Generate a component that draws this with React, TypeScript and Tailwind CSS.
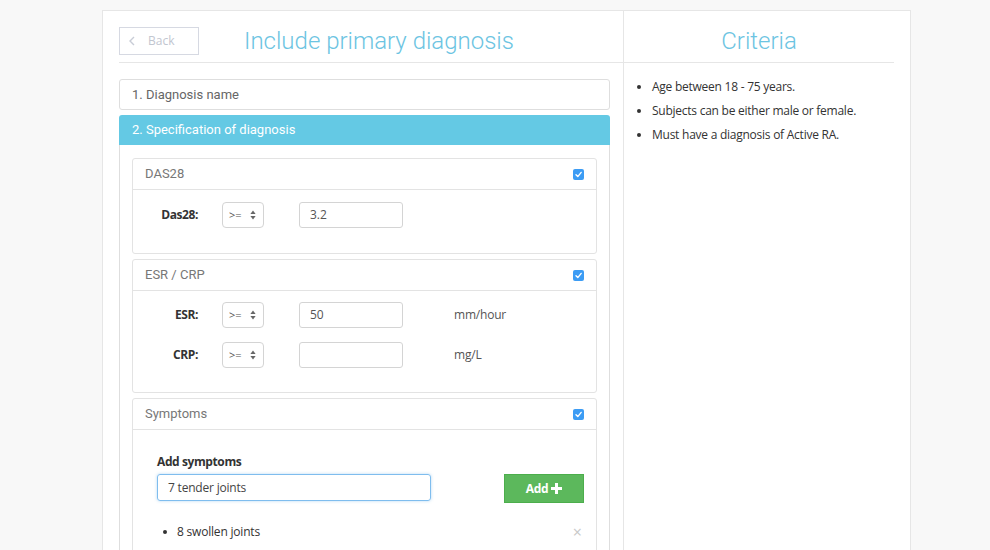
import React from 'react';

const sans = { fontFamily: '"Open Sans", "Liberation Sans", sans-serif' };
const roboto = { fontFamily: 'Roboto, "Open Sans", sans-serif' };

function CheckBox() {
  return (
    <svg width="11" height="11" viewBox="0 0 11 11" className="shrink-0">
      <rect x="0" y="0" width="11" height="11" rx="2" fill="#3c9cf4" />
      <path d="M3 5.8 L4.8 7.6 L8.2 3.4" fill="none" stroke="#fff" strokeWidth="1.4" strokeLinecap="round" strokeLinejoin="round" />
    </svg>
  );
}

function SelectBox() {
  return (
    <div className="w-[42px] h-[26px] border border-[#d4d4d4] rounded-[4px] bg-white flex items-center justify-between pl-[6px] pr-[7px] text-[11px] text-[#555]">
      <span>&gt;=</span>
      <svg width="6" height="10" viewBox="0 0 6 10">
        <path d="M3 0.5 L5.6 4 L0.4 4 Z" fill="#666" />
        <path d="M3 9.5 L5.6 6 L0.4 6 Z" fill="#666" />
      </svg>
    </div>
  );
}

function Row({ label, value, unit }: { label: string; value: string; unit?: string }) {
  return (
    <div className="flex items-center h-[26px]">
      <div className="w-[65px] text-right font-bold text-[12px] tracking-[-0.4px] text-[#333]">{label}</div>
      <div className="ml-[24px]">
        <SelectBox />
      </div>
      <div className="ml-[35px] w-[104px] h-[26px] border border-[#d4d4d4] rounded-[3px] flex items-center pl-[10px] text-[12px] text-[#555]">
        {value}
      </div>
      {unit && <div className="ml-[51px] text-[12px] tracking-[-0.2px] text-[#555]">{unit}</div>}
    </div>
  );
}

function Panel({ title, children }: { title: string; children: React.ReactNode }) {
  return (
    <div className="border border-[#e3e3e3] rounded-[3px] bg-white">
      <div className="h-[31px] border-b border-[#e3e3e3] flex items-center justify-between pl-[12px] pr-[12px]">
        <span className="text-[13px] text-[#777]" style={roboto}>{title}</span>
        <CheckBox />
      </div>
      {children}
    </div>
  );
}

export default function App() {
  const criteria = [
    'Age between 18 - 75 years.',
    'Subjects can be either male or female.',
    'Must have a diagnosis of Active RA.',
  ];

  return (
    <div className="min-h-screen bg-[#f8f8f8] pt-[10px]" style={sans}>
      <div className="ml-[102px] w-[809px] bg-white border border-[#e6e6e6] border-b-0 flex">
        {/* Left column */}
        <div className="w-[521px] border-r border-[#e6e6e6] pl-[16px] pt-[16px] pb-[40px]">
          <div className="h-[36px] border-b border-[#e6e6e6] flex items-start">
            <button className="w-[80px] h-[28px] border border-[#d6d9e2] flex items-center pl-[8px] text-[12px] text-[#c2c6d0]">
              <svg width="8" height="10" viewBox="0 0 8 10" className="mr-[12px]">
                <path d="M6 1 L2 5 L6 9" fill="none" stroke="#c8ccd6" strokeWidth="1.4" />
              </svg>
              Back
            </button>
            <h1 className="ml-[45px] -mt-[2px] text-[24px] font-light text-[#6cc4e2] leading-[32px]" style={roboto}>
              Include primary diagnosis
            </h1>
          </div>

          <div className="mt-[16px] mr-[13px]">
            <div className="h-[31px] border border-[#dedede] rounded-[3px] flex items-center pl-[12px] text-[13px] text-[#666]" style={roboto}>
              1. Diagnosis name
            </div>
            <div className="mt-[5px] h-[30px] bg-[#64c9e4] rounded-t-[3px] flex items-center pl-[13px] text-[13px] text-white" style={roboto}>
              2. Specification of diagnosis
            </div>
            <div className="border-x border-[#dedede] px-[12px] pt-[13px] pb-[20px] flex flex-col gap-[5px]">
              <Panel title="DAS28">
                <div className="pt-[12px] pb-[25px]">
                  <Row label="Das28:" value="3.2" />
                </div>
              </Panel>
              <Panel title="ESR / CRP">
                <div className="pt-[11px] pb-[24px] flex flex-col gap-[14px]">
                  <Row label="ESR:" value="50" unit="mm/hour" />
                  <Row label="CRP:" value="" unit="mg/L" />
                </div>
              </Panel>
              <Panel title="Symptoms">
                <div className="pl-[24px] pr-[12px] pt-[23px] pb-[30px]">
                  <div className="text-[12px] tracking-[-0.4px] font-bold text-[#333] leading-[18px]">Add symptoms</div>
                  <div className="mt-[3px] flex items-start">
                    <div className="w-[274px] h-[27px] border border-[#7fbdee] rounded-[3px] shadow-[0_0_3px_rgba(102,175,233,0.5)] flex items-center pl-[10px] text-[12px] tracking-[-0.2px] text-[#444]">
                      7 tender joints
                    </div>
                    <button className="ml-auto w-[80px] h-[29px] bg-[#5cb85c] border border-[#4cae4c] flex items-center justify-center gap-[3px] text-white font-bold text-[12px] tracking-[-0.3px]">
                      Add
                      <svg width="11" height="11" viewBox="0 0 11 11">
                        <path d="M4 0 H7 V4 H11 V7 H7 V11 H4 V7 H0 V4 H4 Z" fill="#fff" />
                      </svg>
                    </button>
                  </div>
                  <div className="mt-[20px] flex items-center justify-between pl-[6px]">
                    <div className="flex items-center text-[12px] tracking-[-0.2px] text-[#333]">
                      <span className="w-[4px] h-[4px] rounded-full bg-[#333] mr-[10px]" />
                      8 swollen joints
                    </div>
                    <span className="text-[16px] leading-none text-[#c8c8c8] mr-[2px]">×</span>
                  </div>
                  <div className="h-[40px]" />
                </div>
              </Panel>
            </div>
          </div>
        </div>

        {/* Right column */}
        <div className="flex-1 pr-[16px] pt-[16px]">
          <div className="h-[36px] border-b border-[#e6e6e6] flex justify-center items-start">
            <h2 className="-mt-[2px] text-[24px] font-light text-[#6cc4e2] leading-[32px]" style={roboto}>
              Criteria
            </h2>
          </div>
          <ul className="mt-[12px] list-disc pl-[28px] text-[12px] tracking-[-0.25px] text-[#333] leading-[24px]">
            {criteria.map((c) => (
              <li key={c}>{c}</li>
            ))}
          </ul>
        </div>
      </div>
    </div>
  );
}
